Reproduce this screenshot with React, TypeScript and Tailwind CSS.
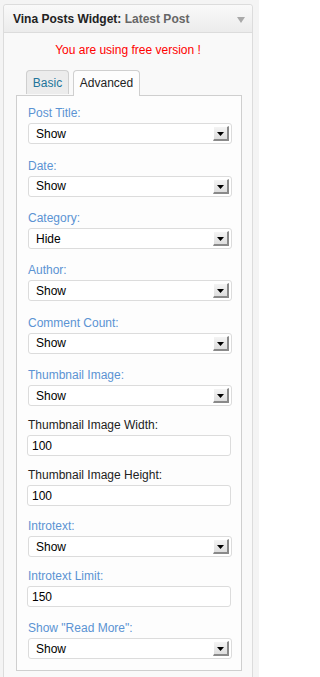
import React from 'react';

type Field = {
    label: string;
    kind: 'select' | 'input';
    value: string;
    blue: boolean;
    space: string;
};

const FIELDS: Field[] = [
    { label: 'Post Title:', kind: 'select', value: 'Show', blue: true, space: 'mb-[14.5px]' },
    { label: 'Date:', kind: 'select', value: 'Show', blue: true, space: 'mb-[14.5px]' },
    { label: 'Category:', kind: 'select', value: 'Hide', blue: true, space: 'mb-[14px]' },
    { label: 'Author:', kind: 'select', value: 'Show', blue: true, space: 'mb-[14.5px]' },
    { label: 'Comment Count:', kind: 'select', value: 'Show', blue: true, space: 'mb-[14.5px]' },
    { label: 'Thumbnail Image:', kind: 'select', value: 'Show', blue: true, space: 'mb-[12px]' },
    { label: 'Thumbnail Image Width:', kind: 'input', value: '100', blue: false, space: 'mb-[12px]' },
    { label: 'Thumbnail Image Height:', kind: 'input', value: '100', blue: false, space: 'mb-[13px]' },
    { label: 'Introtext:', kind: 'select', value: 'Show', blue: true, space: 'mb-[12px]' },
    { label: 'Introtext Limit:', kind: 'input', value: '150', blue: true, space: 'mb-[14px]' },
    { label: 'Show "Read More":', kind: 'select', value: 'Show', blue: true, space: 'mb-0' },
];

function SelectBox({ value }: { value: string }) {
    return (
        <div className="ml-px flex h-[21px] w-[204px] items-center justify-between rounded-[3px] border border-[#dcdcdc] bg-white pl-[7px] pr-[2px]">
            <span className="text-[12px] leading-none text-black">{value}</span>
            {/* bevelled arrow button */}
            <div className="flex h-[15px] w-[16px] items-end justify-center border-t border-l border-r-2 border-b-2 border-t-white border-l-white border-r-[#8a8a8a] border-b-[#8a8a8a] bg-gradient-to-b from-[#f4f4f4] to-[#dedede] pb-[3px]">
                <svg width="7" height="4" viewBox="0 0 7 4">
                    <polygon points="0,0 7,0 3.5,4" fill="#000" />
                </svg>
            </div>
        </div>
    );
}

function TextBox({ value }: { value: string }) {
    return (
        <div className="flex h-[21px] w-[204px] items-center rounded-[3px] border border-[#dcdcdc] bg-white pl-[4px]">
            <span className="text-[12px] leading-none text-black">{value}</span>
        </div>
    );
}

export default function App() {
    return (
        <div
            className="h-[677px] w-[259px] overflow-hidden bg-[#f4f4f4] pl-[3px] pt-[4px]"
            style={{ fontFamily: '"Liberation Sans", Arial, sans-serif' }}
        >
            <div className="w-[250px] rounded-t-[3px] border border-[#dcdcdc] bg-[#f9f9f9]">

                {/* Header */}
                <div className="flex h-[28px] items-center justify-between rounded-t-[3px] border-b border-[#dcdcdc] bg-gradient-to-b from-[#f9f9f9] to-[#ececec] pl-[9px] pr-[7px]">
                    <div className="text-[12px] font-bold leading-none">
                        <span className="text-[#222]">Vina Posts Widget:</span>
                        <span className="text-[#666]"> Latest Post</span>
                    </div>
                    <svg width="8" height="6" viewBox="0 0 8 6" className="mt-[3px]">
                        <polygon points="0,0 8,0 4,6" fill="#a9a9a9" />
                    </svg>
                </div>

                {/* Body */}
                <div className="pt-[10px]">
                    <p className="text-center text-[12px] leading-[15px] text-[#ff0000]">
                        You are using free version !
                    </p>

                    <div className="ml-[12px] mt-[12px]">
                        {/* Tabs */}
                        <div className="flex items-end gap-[4px] pl-[10px]">
                            <div className="mb-[1px] flex h-[24px] w-[43px] items-center justify-center rounded-t-[4px] border border-b-0 border-[#cfcfcf] bg-[#ececec] text-[12px] text-[#21759b]">
                                Basic
                            </div>
                            <div className="relative z-10 -mb-px flex h-[26px] w-[67px] items-center justify-center rounded-t-[4px] border border-b-0 border-[#cfcfcf] bg-[#fdfdfd] pb-[1px] text-[12px] text-[#222]">
                                Advanced
                            </div>
                        </div>

                        {/* Panel */}
                        <div className="w-[226px] border border-[#cfcfcf] bg-[#fdfdfd] px-[10px] pb-[11px] pt-[10px]">
                            {FIELDS.map((f) => (
                                <div key={f.label} className={f.space}>
                                    <div
                                        className={
                                            f.blue
                                                ? 'ml-px text-[12px] leading-[15px] text-[#5b93d3]'
                                                : 'ml-px text-[12px] leading-[15px] text-[#222]'
                                        }
                                    >
                                        {f.label}
                                    </div>
                                    <div className="mt-[2px]">
                                        {f.kind === 'select' ? <SelectBox value={f.value} /> : <TextBox value={f.value} />}
                                    </div>
                                </div>
                            ))}
                        </div>
                    </div>
                    <div className="h-[20px]" />
                </div>
            </div>
        </div>
    );
}
